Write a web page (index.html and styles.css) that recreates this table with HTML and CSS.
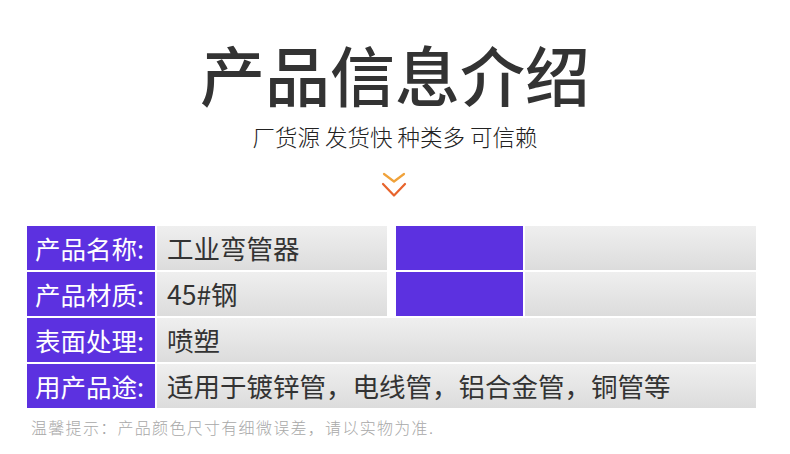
FILE: index.html
```html
<!DOCTYPE html>
<html lang="zh-CN">
<head>
<meta charset="utf-8">
<title>产品信息介绍</title>
<link rel="stylesheet" href="styles.css">
</head>
<body>
<div class="page">
  <h1 class="title">产品信息介绍</h1>
  <p class="subtitle">厂货源 发货快 种类多 可信赖</p>
  <div class="chevron">
    <svg width="30" height="28" viewBox="0 0 30 28">
      <polyline points="5,3 15,10.5 25,3" fill="none" stroke="#f0a23a" stroke-width="2.2" stroke-linecap="round" stroke-linejoin="round"/>
      <polyline points="4,13 15,24.5 26,13" fill="none" stroke="#e8642c" stroke-width="2.2" stroke-linecap="round" stroke-linejoin="round"/>
    </svg>
  </div>
  <div class="table">
    <div class="row">
      <div class="label">产品名称:</div>
      <div class="value fixed">工业弯管器</div>
      <div class="accent"></div>
      <div class="blank"></div>
    </div>
    <div class="row">
      <div class="label">产品材质:</div>
      <div class="value fixed">45#钢</div>
      <div class="accent"></div>
      <div class="blank"></div>
    </div>
    <div class="row">
      <div class="label">表面处理:</div>
      <div class="value wide">喷塑</div>
    </div>
    <div class="row">
      <div class="label">用产品途:</div>
      <div class="value wide">适用于镀锌管，电线管，铝合金管，铜管等</div>
    </div>
  </div>
  <p class="note">温馨提示：产品颜色尺寸有细微误差，请以实物为准.</p>
</div>
</body>
</html>
```
FILE: styles.css
```css
html, body {
  margin: 0;
  padding: 0;
  background: #ffffff;
}
body {
  font-family: "Noto Sans CJK SC", "Noto Sans", sans-serif;
  color: #333333;
}
.page {
  width: 790px;
  height: 454px;
  overflow: hidden;
  display: flex;
  flex-direction: column;
  align-items: center;
}
.title {
  margin: 41px 0 0;
  font-size: 65px;
  line-height: 65px;
  font-weight: 500;
  color: #333333;
  letter-spacing: 0;
}
.subtitle {
  margin: 19px 0 0;
  font-size: 22.5px;
  line-height: 23px;
  font-weight: 300;
  color: #222222;
}
.chevron {
  margin-top: 23px;
  height: 28px;
  margin-left: -2px;
}
.chevron svg {
  display: block;
}
.table {
  align-self: flex-start;
  margin: 27px 0 0 27px;
  width: 729px;
  display: flex;
  flex-direction: column;
  gap: 2px;
}
.row {
  display: flex;
  gap: 2px;
  height: 44px;
}
.label {
  width: 128px;
  flex: none;
  background: #5c31e0;
  color: #ffffff;
  font-size: 25.5px;
  line-height: 44px;
  padding-left: 8px;
  box-sizing: border-box;
  white-space: nowrap;
}
.value {
  background: linear-gradient(to bottom, #efefef, #dcdcdc);
  font-size: 26.5px;
  line-height: 44px;
  padding-left: 10px;
  box-sizing: border-box;
  color: #333333;
  white-space: nowrap;
}
.value.fixed {
  width: 230px;
  flex: none;
}
.value.wide {
  flex: 1;
}
.accent {
  width: 127px;
  flex: none;
  margin-left: 7px;
  background: #5c31e0;
}
.blank {
  flex: 1;
  background: linear-gradient(to bottom, #efefef, #dcdcdc);
}
.note {
  align-self: flex-start;
  margin: 10px 0 0 31px;
  font-size: 16px;
  line-height: 18px;
  letter-spacing: 1.3px;
  color: #a8a8a8;
  font-weight: 300;
  white-space: nowrap;
}
```
